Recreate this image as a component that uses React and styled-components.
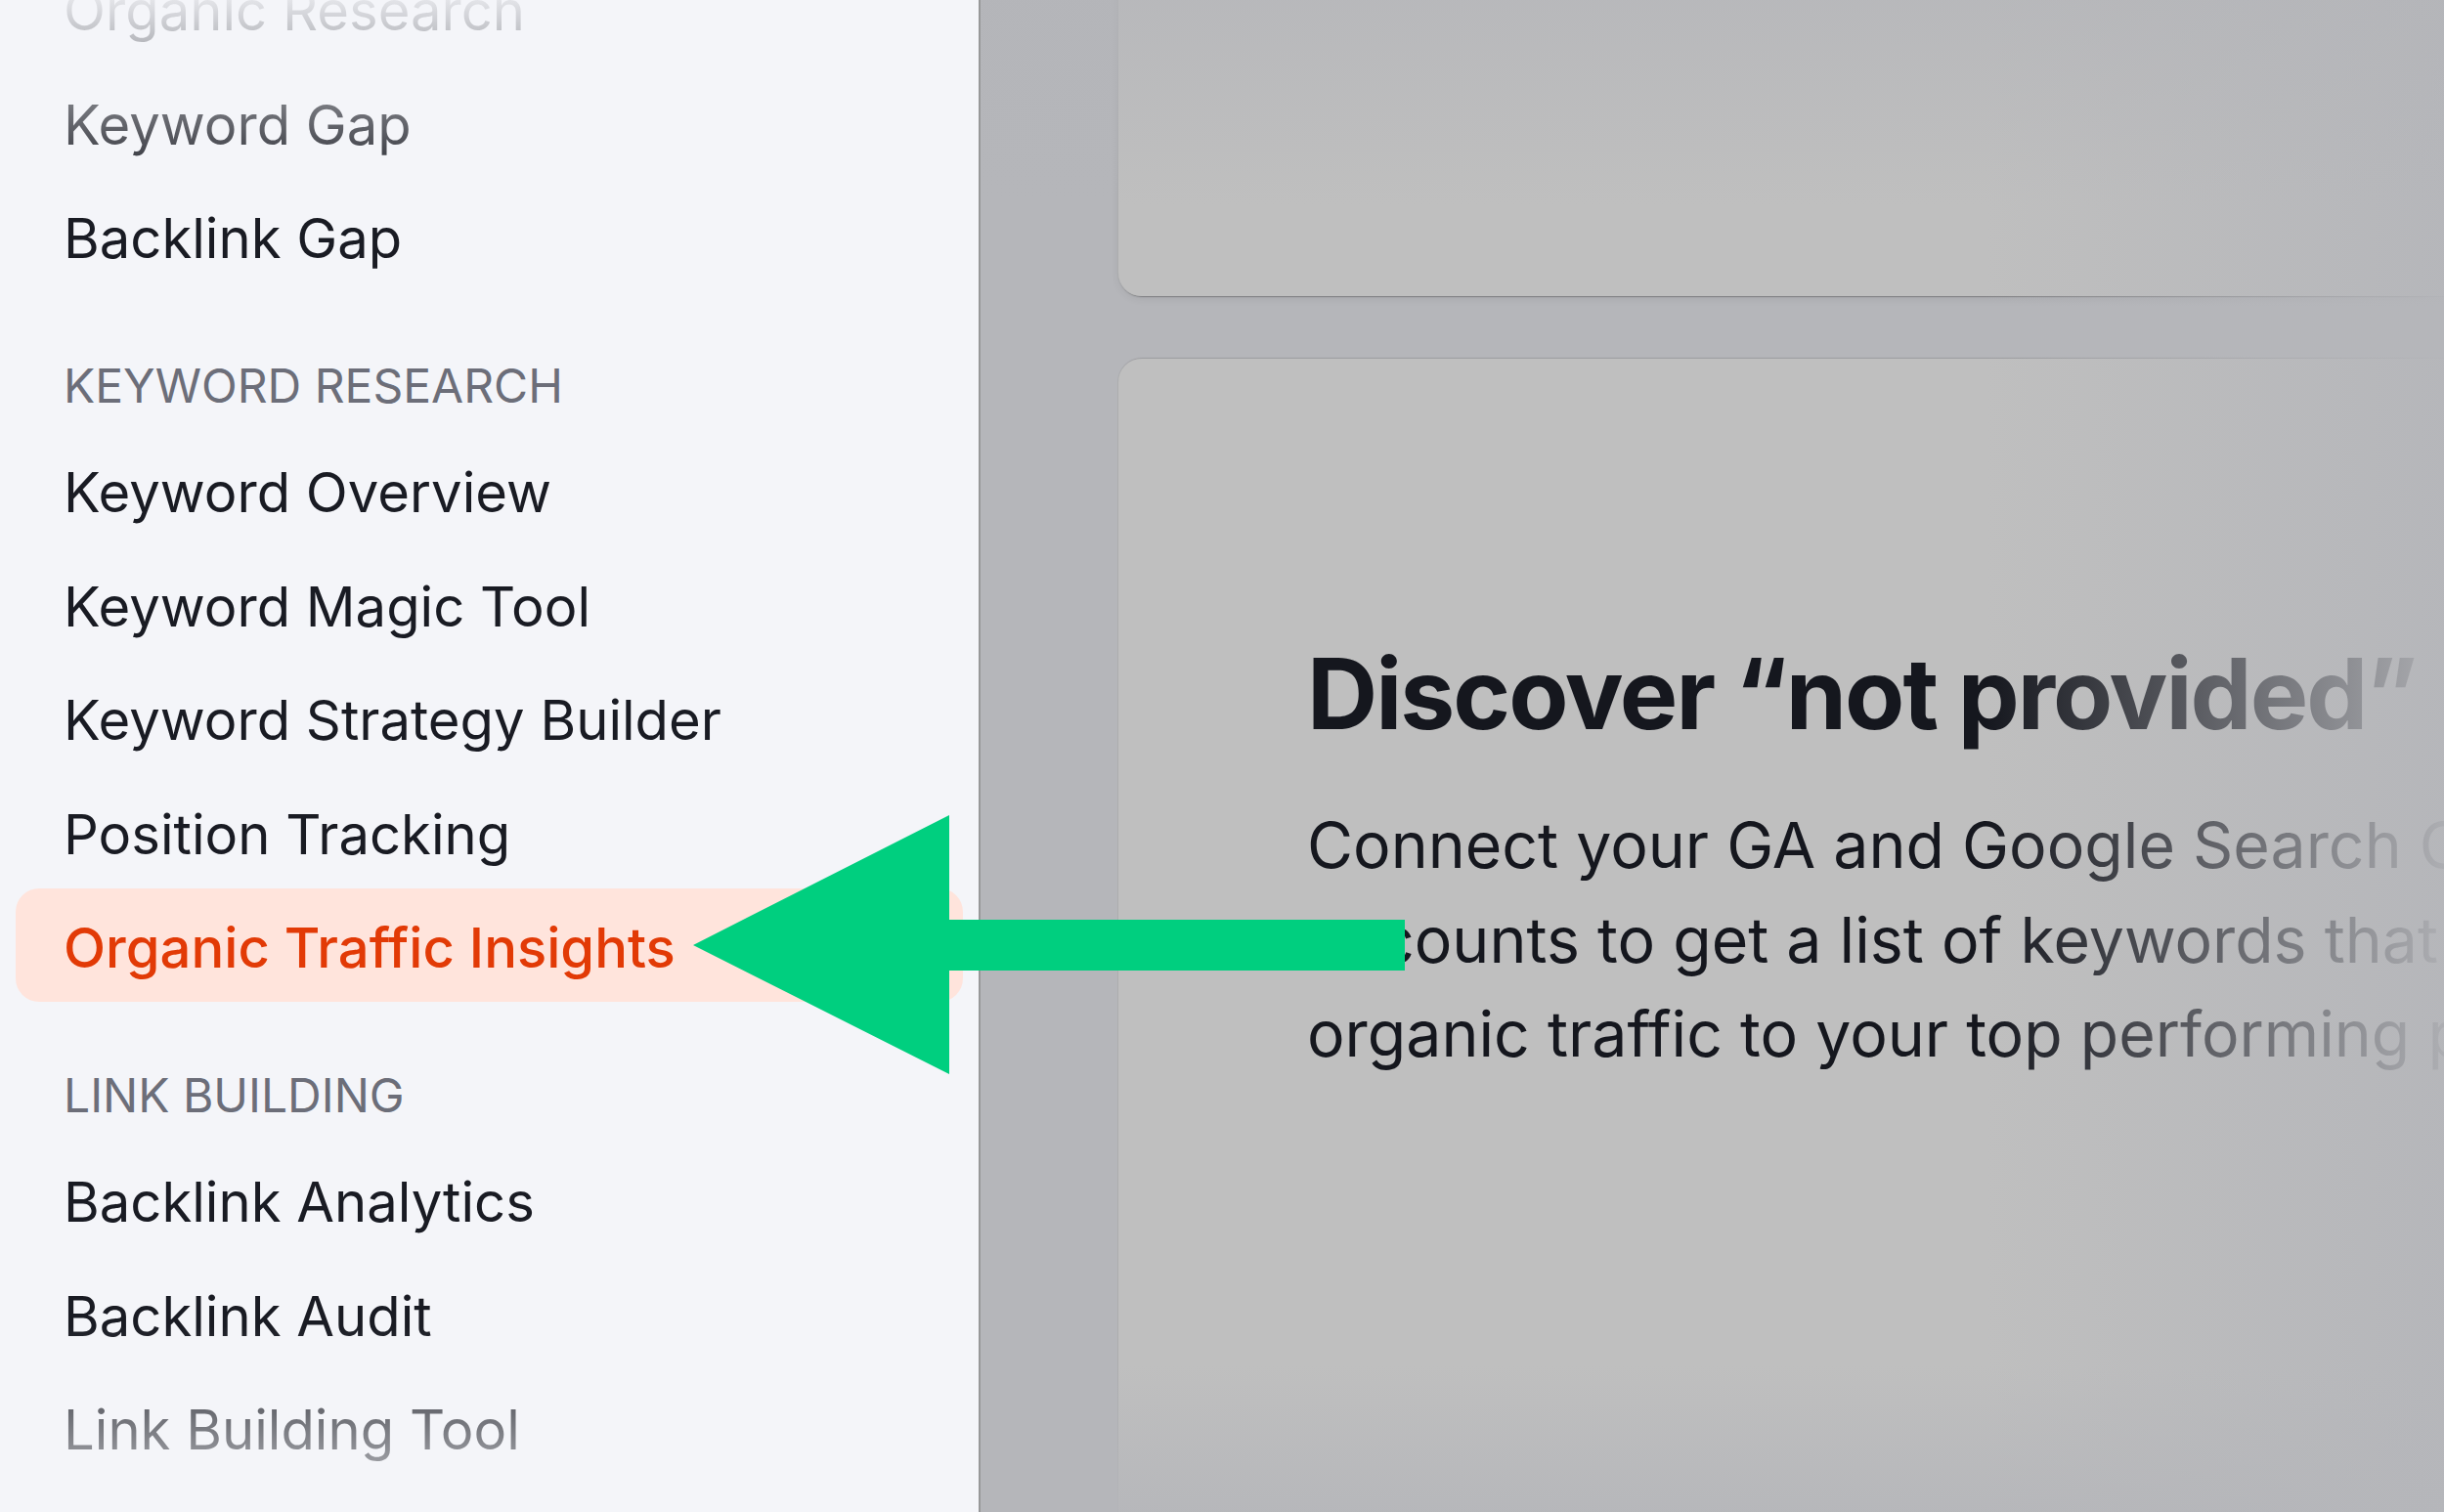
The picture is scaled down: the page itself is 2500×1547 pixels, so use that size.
import React from "react";
import styled, { createGlobalStyle } from "styled-components";

const Global = createGlobalStyle`
  html, body { margin: 0; padding: 0; background: #f4f5f9; }
  #root { width: 2500px; height: 1547px; }
`;

const Page = styled.div`
  position: relative;
  width: 2500px;
  height: 1547px;
  overflow: hidden;
  display: flex;
  font-family: Inter, "Liberation Sans", sans-serif;
`;

const Sidebar = styled.nav`
  position: relative;
  width: 1001px;
  height: 1547px;
  flex: none;
  overflow: hidden;
  background: #f4f5f9;
`;

const NavList = styled.div`
  display: flex;
  flex-direction: column;
  margin-top: -50px;
  padding: 0 16px;
`;

const Row = styled.div`
  height: 116.4px;
  flex: none;
  display: flex;
  align-items: center;
  box-sizing: border-box;
  padding: 6px 0 0 49px;
  border-radius: 24px;
  font-size: 56.2px;
  font-weight: ${(p) => (p.$active ? 500 : 400)};
  line-height: 66px;
  white-space: nowrap;
  color: ${(p) => (p.$active ? "#e23a06" : "#191b23")};
  background: ${(p) => (p.$active ? "#ffe4dc" : "transparent")};
`;

const SectionTitle = styled.div`
  height: 144px;
  flex: none;
  box-sizing: border-box;
  padding: 66.6px 0 0 49px;
  font-size: 48px;
  line-height: 58px;
  white-space: nowrap;
  color: #6c6e79;
`;

const SidebarFade = styled.div`
  position: absolute;
  left: 0;
  right: 0;
  ${(p) => (p.$edge === "top"
    ? "top: 0; height: 200px; background: linear-gradient(to bottom, rgba(244,245,249,0.92), rgba(244,245,249,0));"
    : "bottom: 0; height: 190px; background: linear-gradient(to top, rgba(244,245,249,0.8), rgba(244,245,249,0));")}
  pointer-events: none;
`;

const Main = styled.main`
  position: relative;
  flex: 1;
  height: 1547px;
  overflow: hidden;
  box-sizing: border-box;
  background: #b5b6ba;
  border-left: 2px solid #979899;
  padding-left: 141px;
  display: flex;
  flex-direction: column;
  gap: 64px;
`;

const Card = styled.section`
  flex: none;
  width: 1600px;
  box-sizing: border-box;
  background: #bfbfbf;
  border-radius: 24px;
`;

const TopCard = styled(Card)`
  height: 403px;
  margin-top: -100px;
  box-shadow: -1px 0 0 #acadaf, 0 1px 1px rgba(0, 0, 0, 0.28), 0 3px 8px rgba(0, 0, 0, 0.07);
`;

const BodyCard = styled(Card)`
  height: 1400px;
  padding: 286px 0 0 193px;
  box-shadow: -1px 0 0 #acadaf, 0 -1px 1px rgba(0, 0, 0, 0.14);
`;

const Title = styled.h2`
  margin: 0;
  font-size: 100px;
  line-height: 114px;
  font-weight: 700;
  letter-spacing: -2px;
  color: #15171e;
  white-space: nowrap;
`;

const Copy = styled.p`
  margin: 50px 0 0;
  font-size: 64.4px;
  line-height: 96.5px;
  color: #15171e;
  white-space: pre;
`;

const FadeTop = styled.div`
  position: absolute;
  top: 0;
  left: 0;
  right: 0;
  height: 210px;
  background: linear-gradient(to bottom, rgba(180, 181, 185, 0.65), rgba(180, 181, 185, 0));
  pointer-events: none;
`;

const FadeBottom = styled.div`
  position: absolute;
  bottom: 0;
  left: 0;
  right: 0;
  height: 150px;
  background: linear-gradient(to top, rgba(181, 182, 186, 0.85), rgba(181, 182, 186, 0));
  pointer-events: none;
`;

const FadeRight = styled.div`
  position: absolute;
  top: 0;
  right: 0;
  bottom: 0;
  width: 470px;
  background: linear-gradient(to right, rgba(181, 182, 186, 0), rgba(181, 182, 186, 0.95));
  pointer-events: none;
`;

const Arrow = styled.svg`
  position: absolute;
  left: 709px;
  top: 834px;
  width: 728px;
  height: 265px;
`;

const Group = ({ title, items }) => (
  <>
    {title && <SectionTitle>{title}</SectionTitle>}
    {items.map((i) => (
      <Row key={i} $active={i === "Organic Traffic Insights"}>{i}</Row>
    ))}
  </>
);

export default function App() {
  return (
    <Page>
      <Global />
      <Sidebar>
        <NavList>
          <Group items={["Organic Research", "Keyword Gap", "Backlink Gap"]} />
          <Group
            title="KEYWORD RESEARCH"
            items={["Keyword Overview", "Keyword Magic Tool", "Keyword Strategy Builder", "Position Tracking", "Organic Traffic Insights"]}
          />
          <Group title="LINK BUILDING" items={["Backlink Analytics", "Backlink Audit", "Link Building Tool"]} />
        </NavList>
        <SidebarFade $edge="top" />
        <SidebarFade $edge="bottom" />
      </Sidebar>
      <Main>
        <TopCard />
        <BodyCard>
          <Title>Discover “not provided”</Title>
          <Copy>{"Connect your GA and Google Search Console\naccounts to get a list of keywords that drive\norganic traffic to your top performing pages"}</Copy>
        </BodyCard>
        <FadeRight />
        <FadeTop />
        <FadeBottom />
      </Main>
      <Arrow viewBox="0 0 728 265">
        <polygon fill="#00cf7f" points="0,133 262,0 262,107 728,107 728,159 262,159 262,265" />
      </Arrow>
    </Page>
  );
}
